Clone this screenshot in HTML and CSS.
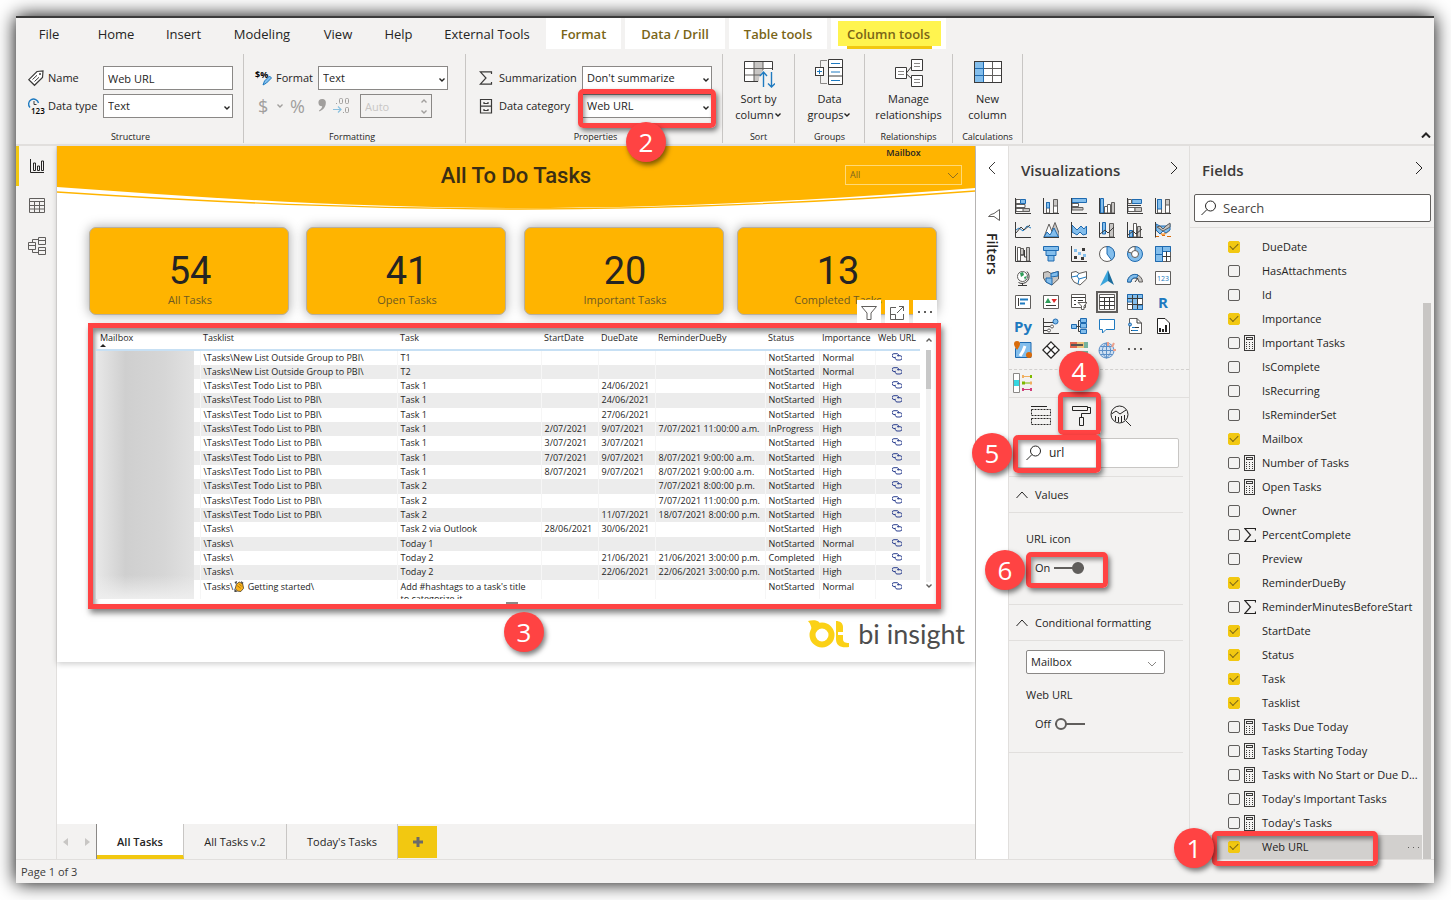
FILE: index.html
```html
<!DOCTYPE html>
<html lang="en">
<head>
  <meta charset="UTF-8">
  <meta name="viewport" content="width=device-width, initial-scale=1.0">
  <title>All To Do Tasks</title>
  <link rel="stylesheet" href="styles.css">
</head>
<body>
  <!-- Shared icons -->
  <svg class="sprite" aria-hidden="true">
    <symbol id="chev" viewBox="0 0 8 8"><path d="M1.5 2.5L4 5L6.500 2.500" fill="none" stroke="currentColor" stroke-width="1.400"/></symbol>
    <symbol id="chev-right" viewBox="0 0 8 14"><path d="M1 1L7 7L1 13" fill="none" stroke="currentColor"/></symbol>
    <symbol id="chev-up" viewBox="0 0 12 8"><path d="M.5 7L6 1L11.500 7" fill="none" stroke="currentColor"/></symbol>
    <symbol id="search" viewBox="0 0 16 16"><g fill="none" stroke="currentColor"><circle cx="9.500" cy="6" r="5"/><path d="M6 9.500L.5 15"/></g></symbol>
    <symbol id="sigma" viewBox="0 0 12 14"><path d="M11.500 2.500V.5H.8L6.500 7L.8 13.500H11.500V11.500" fill="none" stroke="currentColor" stroke-width="1.200"/></symbol>
    <symbol id="calc" viewBox="0 0 12 16"><rect x=".5" y=".5" width="10" height="15" fill="none" stroke="#3b3a39"/><rect x="2.500" y="2.500" width="6" height="2" fill="none" stroke="#3b3a39"/><path d="M2 7.500h8M2 9.500h8M2 11.500h8M2 13.500h8" stroke="#3b3a39" stroke-dasharray="1 2"/></symbol>
    <symbol id="link" viewBox="0 0 10 8"><path d="M3 4.500H2A1.800 1.800 0 0 1 2 .7H5A1.800 1.800 0 0 1 6.600 3.300M5 2.700H8A2 2 0 0 1 8 7H5A2 2 0 0 1 3.600 3.800" fill="none" stroke="#2b3f8f"/></symbol>
  </svg>

  <div class="app">
    <nav class="tabs">
      <button>File</button>
      <button>Home</button>
      <button>Insert</button>
      <button>Modeling</button>
      <button>View</button>
      <button>Help</button>
      <button>External Tools</button>
      <button class="context">Format</button>
      <button class="context">Data / Drill</button>
      <button class="context">Table tools</button>
      <button class="context active"><span>Column tools</span></button>
    </nav>

    <div class="ribbon">
      <section class="group structure">
        <div class="fields">
          <svg class="i16" viewBox="0 0 16 16"><path d="M9 1.500L15 1L14.500 7.500L6.500 15.300L.8 9.700Z" fill="#fff" stroke="#3b3a39" stroke-width="1.200"/><circle cx="12" cy="4" r="1" fill="#3b3a39"/><path d="M4.500 9.500L9 5.300M6.500 11.500L11 7.300" stroke="#3b3a39"/></svg>
          <label for="name">Name</label>
          <input id="name" type="text" value="Web URL">
          <svg class="i16" viewBox="0 0 16 16"><path d="M2 9.500A5 5 0 1 1 10.500 5" fill="none" stroke="#1e7ac0" stroke-width="1.400"/><path d="M6 3V6.500H8.500" fill="none" stroke="#3b3a39"/><text x="3" y="16" class="icon-123">123</text></svg>
          <label for="type">Data type</label>
          <span class="select"><select id="type"><option>Text</option></select><svg><use href="#chev"/></svg></span>
        </div>
        <h3>Structure</h3>
      </section>

      <section class="group formatting">
        <div class="fields">
          <svg class="i16" viewBox="0 0 16 16"><text x="-1" y="8" class="icon-fmt">$%</text><path d="M7 15L8.500 11L13.500 6L15.500 8L10.500 13Z" fill="#83beec" stroke="#1e7ac0"/></svg>
          <label for="format">Format</label>
          <span class="select"><select id="format"><option>Text</option></select><svg><use href="#chev"/></svg></span>
        </div>
        <div class="number-tools">
          <button class="dollar">$ <svg><use href="#chev"/></svg></button>
          <button class="percent">%</button>
          <button class="comma" aria-label="Thousands separator"><svg viewBox="0 0 8 14"><path d="M4 0A3.500 3.500 0 0 1 7.800 4C7.800 8 5 11 1.500 12.500L1 11.500C3 10.500 4 9 4.200 7.300A3.600 3.600 0 0 1 4 0Z" fill="#a19f9d"/></svg></button>
          <button class="decimals" aria-label="Decimal places"><svg viewBox="0 0 18 18"><g fill="none" stroke="#a19f9d"><rect x="6.500" y="1.500" width="3" height="5" rx="1"/><rect x="12.500" y="1.500" width="3" height="5" rx="1"/><rect x="12.500" y="10.500" width="3" height="5" rx="1"/></g><path d="M3 6.500H4M10 15.500H11" stroke="#a19f9d"/><path d="M0 12.500H8M5 9.500L8 12.500L5 15.500" fill="none" stroke="#8ac0de" stroke-width="1.200"/></svg></button>
          <span class="select spinner"><input type="text" value="Auto" aria-label="Decimal places" disabled><svg class="up"><use href="#chev"/></svg><svg class="down"><use href="#chev"/></svg></span>
        </div>
        <h3>Formatting</h3>
      </section>

      <section class="group properties">
        <div class="fields">
          <svg class="i14" viewBox="0 0 14 14"><path d="M12.500 3V.8H1.300L7 7L1.300 13.200H12.500V11" fill="none" stroke="#3b3a39" stroke-width="1.200"/></svg>
          <label for="sum">Summarization</label>
          <span class="select"><select id="sum"><option>Don't summarize</option></select><svg><use href="#chev"/></svg></span>
          <svg class="i14" viewBox="0 0 14 16"><path d="M1.500 1.500H12.500V15H1.500ZM1.500 8.200H12.500M5 4V5.500H9V4M5 11V12.500H9V11" fill="none" stroke="#3b3a39" stroke-width="1.200"/></svg>
          <label for="cat">Data category</label>
          <span class="select"><select id="cat"><option>Web URL</option></select><svg><use href="#chev"/></svg></span>
        </div>
        <h3>Properties</h3>
        <div class="mark mark-2"></div>
        <div class="step step-2">2</div>
      </section>

      <section class="group sort">
        <button class="big">
          <svg viewBox="0 0 32 30"><rect x="2" y="2.500" width="27" height="20" fill="#fff"/><rect x="11" y="2.500" width="9" height="20" fill="#c8c6c4"/><path d="M2 9.500H29M2 16H29M11 2.500V22.500M20 2.500V22.500" stroke="#605e5c"/><path d="M15 22.500H1.500V2.500H29.500V11" fill="none" stroke="#3b3a39"/><path d="M16 30V19L20 11H32V30Z" fill="#f3f2f1"/><path d="M20.500 28V13.500M17 17L20.500 13L24 17M28.500 13V27.500M25 24.500L28.500 28L32 24.500" fill="none" stroke="#1e7ac0" stroke-width="1.400"/></svg>
          Sort by<br>column<svg class="c"><use href="#chev"/></svg>
        </button>
        <h3>Sort</h3>
      </section>

      <section class="group groups">
        <button class="big">
          <svg viewBox="0 0 32 30"><path d="M14.500 .5H28.500V25.500H14.500Z" fill="#fff" stroke="#3b3a39"/><path d="M14.500 8.500H28.500M14.500 17H28.500" stroke="#3b3a39"/><path d="M17 4.500H26M17 13H26M17 21.500H26" stroke="#1e7ac0"/><path d="M13 1.500H6.500V8M6.500 17V24.500H13" fill="none" stroke="#8a8886"/><rect x="1.500" y="8.500" width="8" height="8" fill="#fff" stroke="#3b3a39"/><path d="M5.500 10.500V15M3 12.500H8" stroke="#1e7ac0"/></svg>
          Data<br>groups<svg class="c"><use href="#chev"/></svg>
        </button>
        <h3>Groups</h3>
      </section>

      <section class="group relations">
        <button class="big">
          <svg viewBox="0 0 32 30"><path d="M13 14.500L19 7M13 14.500L19 20" stroke="#3b3a39"/><path d="M2.500 8.500H13.500V19.500H2.500ZM18.500 .5H29.500V11.500H18.500ZM18.500 16.500H29.500V27.500H18.500Z" fill="#fff" stroke="#3b3a39"/><path d="M5 12.500H11M5 15.500H11M21 4.500H27M21 7.500H27M21 20.500H27M21 23.500H27" stroke="#8a8886"/></svg>
          Manage<br>relationships
        </button>
        <h3>Relationships</h3>
      </section>

      <section class="group calcs">
        <button class="big">
          <svg viewBox="0 0 32 30"><rect x="2.500" y="2.500" width="27" height="21" fill="#fff" stroke="#3b3a39"/><path d="M20.500 3V23M12 9.500H29M12 16.500H29" stroke="#605e5c"/><rect x="3" y="3" width="8.500" height="20" fill="#83beec"/><path d="M11.500 3V23M3 9.500H12M3 16.500H12" stroke="#1e6ab0"/></svg>
          New<br>column
        </button>
        <h3>Calculations</h3>
      </section>

      <button class="collapse" aria-label="Collapse ribbon"><svg viewBox="0 0 10 6"><path d="M1 5.500L5 1.500L9 5.500" fill="none" stroke="#252423" stroke-width="2"/></svg></button>
    </div>

    <div class="body">
      <nav class="side">
        <button class="on" aria-label="Report"><svg viewBox="0 0 18 18"><path d="M2.500 2V15.500H16M5.500 6V13.500H7.500V6ZM9.500 9V13.500H11.500V9ZM13.500 4V13.500H15.500V4Z" fill="none" stroke="#252423"/></svg></button>
        <button aria-label="Data"><svg viewBox="0 0 18 18"><path d="M1.500 1.500H16.500V15.500H1.500ZM1.500 4.500H16.500M1.500 8.500H16.500M1.500 12H16.500M6.500 4.500V15.500M11.500 4.500V15.500" fill="none" stroke="#605e5c"/></svg></button>
        <button aria-label="Model"><svg viewBox="0 0 18 18"><path d="M.5 5.500H7.500V12.500H.5ZM.5 8.500H7.500M10.500 .5H17.500V7.500H10.500ZM10.500 3.500H17.500M10.500 10.500H17.500V17.500H10.500ZM10.500 13.500H17.500M4.500 5.500V2.500H10.500M4.500 12.500V15.500H10.500" fill="none" stroke="#605e5c"/></svg></button>
      </nav>

      <main class="canvas">
        <div class="page">
          <header class="hero">
            <svg class="swoosh" viewBox="0 0 918 64" preserveAspectRatio="none"><path d="M0 0H918V42C740 56 600 62 463 62C300 62 150 52 0 41Z" fill="#ffb400"/><path d="M0 46C150 56 300 63 463 63C600 63 760 57 918 45" fill="none" stroke="#ffb400" stroke-width="1.300"/></svg>
            <h1>All To Do Tasks</h1>
            <div class="slicer">
              <label for="mailbox">Mailbox</label>
              <span class="select"><select id="mailbox"><option>All</option></select><svg viewBox="0 0 12 8"><path d="M1 1L6 6L11 1" fill="none" stroke="#8f7020"/></svg></span>
            </div>
          </header>

          <div class="cards">
            <div class="card"><b>54</b><span>All Tasks</span></div>
            <div class="card"><b>41</b><span>Open Tasks</span></div>
            <div class="card"><b>20</b><span>Important Tasks</span></div>
            <div class="card"><b>13</b><span>Completed Tasks</span></div>
          </div>

          <div class="visual">
            <div class="visual-tools">
              <button aria-label="Filters"><svg viewBox="0 0 18 18"><path d="M1.500 2.500H16.500L11 9V15.500H7V9Z" fill="none" stroke="#605e5c"/></svg></button>
              <button aria-label="Focus mode"><svg viewBox="0 0 18 18"><path d="M8 3.500H2.500V15.500H15.500V10M2.500 10.500H7.500V15.500M9 9L15.500 2.500M11 2.500H15.500V7" fill="none" stroke="#605e5c"/></svg></button>
              <button aria-label="More options"><svg viewBox="0 0 18 18"><path d="M2 8H4M8 8H10M14 8H16" stroke="#605e5c" stroke-width="2"/></svg></button>
            </div>
            <div class="scroll">
              <table>
                <colgroup><col class="w-mail"><col class="w-list"><col class="w-task"><col class="w-date"><col class="w-date"><col class="w-rem"><col class="w-stat"><col class="w-imp"><col class="w-url"></colgroup>
                <thead>
                  <tr><th class="sorted">Mailbox</th><th>Tasklist</th><th>Task</th><th>StartDate</th><th>DueDate</th><th>ReminderDueBy</th><th>Status</th><th>Importance</th><th>Web URL</th></tr>
                </thead>
                <tbody>
                  <tr><td></td><td>\Tasks\New List Outside Group to PBI\</td><td>T1</td><td></td><td></td><td></td><td>NotStarted</td><td>Normal</td><td><a href="#" aria-label="Open"><svg><use href="#link"/></svg></a></td></tr>
                  <tr><td></td><td>\Tasks\New List Outside Group to PBI\</td><td>T2</td><td></td><td></td><td></td><td>NotStarted</td><td>Normal</td><td><a href="#" aria-label="Open"><svg><use href="#link"/></svg></a></td></tr>
                  <tr><td></td><td>\Tasks\Test Todo List to PBI\</td><td>Task 1</td><td></td><td>24/06/2021</td><td></td><td>NotStarted</td><td>High</td><td><a href="#" aria-label="Open"><svg><use href="#link"/></svg></a></td></tr>
                  <tr><td></td><td>\Tasks\Test Todo List to PBI\</td><td>Task 1</td><td></td><td>24/06/2021</td><td></td><td>NotStarted</td><td>High</td><td><a href="#" aria-label="Open"><svg><use href="#link"/></svg></a></td></tr>
                  <tr><td></td><td>\Tasks\Test Todo List to PBI\</td><td>Task 1</td><td></td><td>27/06/2021</td><td></td><td>NotStarted</td><td>High</td><td><a href="#" aria-label="Open"><svg><use href="#link"/></svg></a></td></tr>
                  <tr><td></td><td>\Tasks\Test Todo List to PBI\</td><td>Task 1</td><td>2/07/2021</td><td>9/07/2021</td><td>7/07/2021 11:00:00 a.m.</td><td>InProgress</td><td>High</td><td><a href="#" aria-label="Open"><svg><use href="#link"/></svg></a></td></tr>
                  <tr><td></td><td>\Tasks\Test Todo List to PBI\</td><td>Task 1</td><td>3/07/2021</td><td>3/07/2021</td><td></td><td>NotStarted</td><td>High</td><td><a href="#" aria-label="Open"><svg><use href="#link"/></svg></a></td></tr>
                  <tr><td></td><td>\Tasks\Test Todo List to PBI\</td><td>Task 1</td><td>7/07/2021</td><td>9/07/2021</td><td>8/07/2021 9:00:00 a.m.</td><td>NotStarted</td><td>High</td><td><a href="#" aria-label="Open"><svg><use href="#link"/></svg></a></td></tr>
                  <tr><td></td><td>\Tasks\Test Todo List to PBI\</td><td>Task 1</td><td>8/07/2021</td><td>9/07/2021</td><td>8/07/2021 9:00:00 a.m.</td><td>NotStarted</td><td>High</td><td><a href="#" aria-label="Open"><svg><use href="#link"/></svg></a></td></tr>
                  <tr><td></td><td>\Tasks\Test Todo List to PBI\</td><td>Task 2</td><td></td><td></td><td>7/07/2021 8:00:00 p.m.</td><td>NotStarted</td><td>High</td><td><a href="#" aria-label="Open"><svg><use href="#link"/></svg></a></td></tr>
                  <tr><td></td><td>\Tasks\Test Todo List to PBI\</td><td>Task 2</td><td></td><td></td><td>7/07/2021 11:00:00 p.m.</td><td>NotStarted</td><td>High</td><td><a href="#" aria-label="Open"><svg><use href="#link"/></svg></a></td></tr>
                  <tr><td></td><td>\Tasks\Test Todo List to PBI\</td><td>Task 2</td><td></td><td>11/07/2021</td><td>18/07/2021 8:00:00 p.m.</td><td>NotStarted</td><td>High</td><td><a href="#" aria-label="Open"><svg><use href="#link"/></svg></a></td></tr>
                  <tr><td></td><td>\Tasks\</td><td>Task 2 via Outlook</td><td>28/06/2021</td><td>30/06/2021</td><td></td><td>NotStarted</td><td>High</td><td><a href="#" aria-label="Open"><svg><use href="#link"/></svg></a></td></tr>
                  <tr><td></td><td>\Tasks\</td><td>Today 1</td><td></td><td></td><td></td><td>NotStarted</td><td>Normal</td><td><a href="#" aria-label="Open"><svg><use href="#link"/></svg></a></td></tr>
                  <tr><td></td><td>\Tasks\</td><td>Today 2</td><td></td><td>21/06/2021</td><td>21/06/2021 3:00:00 p.m.</td><td>Completed</td><td>High</td><td><a href="#" aria-label="Open"><svg><use href="#link"/></svg></a></td></tr>
                  <tr><td></td><td>\Tasks\</td><td>Today 2</td><td></td><td>22/06/2021</td><td>22/06/2021 3:00:00 p.m.</td><td>NotStarted</td><td>High</td><td><a href="#" aria-label="Open"><svg><use href="#link"/></svg></a></td></tr>
                  <tr><td></td><td>\Tasks\<svg class="clap" viewBox="0 0 12 12"><path d="M1 1L4 0L3 4ZM8 0L11 2L9 4ZM1 8L4 12H1Z" fill="#4a4a4a"/><path d="M3 4L6 1L10 3L11 8L8 11.500L4 11L2 8Z" fill="#f9b21d" stroke="#3b3020" stroke-width=".8"/><path d="M4 5L8 8M6 3L9 6" stroke="#8a5a00" stroke-width=".7"/></svg> Getting started\</td><td>Add #hashtags to a task's title<br>to categorize it</td><td></td><td></td><td></td><td>NotStarted</td><td>Normal</td><td><a href="#" aria-label="Open"><svg><use href="#link"/></svg></a></td></tr>
                </tbody>
              </table>
              <div class="redacted"></div>
            </div>
            <div class="vbar"><svg class="up"><use href="#chev"/></svg><i></i><svg><use href="#chev"/></svg></div>
            <div class="handle"></div>
            <div class="step step-3">3</div>
          </div>

          <footer class="brand">
            <svg viewBox="0 0 42 28"><path d="M0 1C4 0 9 0 11 2L13 6L4 14C4 9 3 4 0 1Z" fill="#fbd116"/><circle cx="14" cy="15" r="9.500" fill="none" stroke="#fbd116" stroke-width="6"/><path d="M28 1C32 1 35 3 35 7V12H30V15H35V19C35 22 37 23 41 23V27C33 28 28 26 28 19Z" fill="#fbd116"/></svg>
            <span>bi insight</span>
          </footer>
        </div>

        <div class="pages">
          <span class="arrows"><svg viewBox="0 0 40 10"><path d="M11 1V9L6 5ZM28 1V9L33 5Z" fill="#c8c6c4"/></svg></span>
          <button class="on">All Tasks</button>
          <button>All Tasks v.2</button>
          <button class="third">Today's Tasks</button>
          <button class="add" aria-label="New page"><svg viewBox="0 0 12 12"><path d="M6 1V11M1 6H11" stroke="#6b6a68" stroke-width="3"/></svg></button>
        </div>
      </main>

      <aside class="filters">
        <svg class="back" viewBox="0 0 8 14"><path d="M7 1L1 7L7 13" fill="none" stroke="#3b3a39"/></svg>
        <svg class="funnel" viewBox="0 0 12 12"><path d="M11.500 .5V11.500L6 7.500H.5L3 5.500L6 4.500Z" fill="none" stroke="#605e5c"/></svg>
        <h2>Filters</h2>
      </aside>

      <aside class="viz">
        <div class="head"><h2>Visualizations</h2><svg><use href="#chev-right"/></svg></div>
        <div class="gallery">
          <button><svg viewBox="0 0 16 16"><path class="g" d="M1 10.500H14.500V13.500H1Z"/><path class="w" d="M1 1.500H5.500V5.500H1ZM1 6.500H10V9.500H1ZM1 10.500H8V13.500H1Z"/><path class="b" d="M5.500 1.500H10.500V5.500H5.500Z"/><path class="k" d="M.5 0V15.500H16"/></svg></button>
          <button><svg viewBox="0 0 16 16"><path class="w" d="M3.500 4.500H6.500V15H3.500ZM10.500 2.500H14.500V15H10.500Z"/><path class="b" d="M3.500 4.500H6.500V10H3.500Z"/><path class="g" d="M10.500 1.500H14.500V8H10.500Z"/><path class="k" d="M.5 0V15.500H16"/></svg></button>
          <button><svg viewBox="0 0 16 16"><path class="b" d="M1 .5H15.500V4.500H1Z"/><path class="w" d="M1 5.500H7.500V8.500H1Z"/><path class="g" d="M1 9.500H12V12H1Z"/><path class="k" d="M.5 0V15.500H16"/></svg></button>
          <button><svg viewBox="0 0 16 16"><path class="b" d="M1.500 .5H4.500V15H1.500Z"/><path class="w" d="M5.500 8.500H8.500V15H5.500ZM8.500 6.500H11.500V15H8.500Z"/><path class="g" d="M12.500 4.500H15.500V15H12.500Z"/><path class="k" d="M.5 0V15.500H16"/></svg></button>
          <button><svg viewBox="0 0 16 16"><path class="b" d="M5 1.500H14.500V5.500H5Z"/><path class="w" d="M1 1.500H4.500V5.500H1ZM1 9.500H8V13.500H1Z"/><path class="g" d="M8 9.500H14.500V13.500H8Z"/><path class="k" d="M.5 0V15.500H16M1 7.500H14"/></svg></button>
          <button><svg viewBox="0 0 16 16"><path class="w" d="M2.500 1.500H6.500V15H2.500ZM10.500 1.500H14.500V15H10.500Z"/><path class="b" d="M2.500 1.500H6.500V11H2.500Z"/><path class="g" d="M10.500 1.500H14.500V7H10.500Z"/><path class="k" d="M.5 0V15.500H16"/></svg></button>

          <button><svg viewBox="0 0 16 16"><path class="bl" d="M1 8L4 6L8 9L12 4L16 6"/><path class="k" d="M.5 0V15.500H16M1 11L6 5L9 8L15 3"/></svg></button>
          <button><svg viewBox="0 0 16 16"><path class="g" d="M6 15L12 .5L16 11V15Z"/><path class="w" d="M1 15L6 2L11 15Z"/><path class="b" d="M1 15L4 10L7 13L11 6L15.500 15Z"/><path class="k" d="M.5 15.500H16"/></svg></button>
          <button><svg viewBox="0 0 16 16"><path class="b" d="M1 3L6 8L10 4L13 7L15.500 4V12L12 13L9 10L6 13L1 10Z"/><path class="k" d="M.5 0V15.500H16"/></svg></button>
          <button><svg viewBox="0 0 16 16"><path class="b" d="M3.500 .5H6.500V12H3.500Z"/><path class="g" d="M10.500 1.500H14.500V15H10.500Z"/><path class="k" d="M.5 0V15.500H16M1 12L6 8L9 11L15 5"/></svg></button>
          <button><svg viewBox="0 0 16 16"><path class="b" d="M2.500 8.500H5.500V15H2.500Z"/><path class="w" d="M6.500 1.500H9.500V15H6.500Z"/><path class="g" d="M10.500 4.500H13.500V15H10.500Z"/><path class="k" d="M.5 0V15.500H16M1 13L6 9L9 12L15 7"/></svg></button>
          <button><svg viewBox="0 0 16 16"><path d="M1 5L8 12L15 4V9L8 14L1 9Z" fill="#f5a04c"/><path class="b" d="M1 2L5 4H11L15 2V8L11 11L8 9L5 12L1 8Z"/><path class="g" d="M5 4L8 7L11 4L15 1V5L8 9L2 5Z"/><path d="M1 14.500H4M7 13.500H10M12 14.500H16" stroke="#d96b0a"/><path class="k" d="M.5 0V15.500"/></svg></button>

          <button><svg viewBox="0 0 16 16"><path class="w" d="M2.500 1.500H5.500V15H2.500Z"/><path class="g" d="M5.500 2.500H8.500V9H5.500ZM11.500 1.500H14.500V15H11.500Z"/><path class="k" d="M.5 0V15.500H16M9.500 4V11H12M6 9H10"/></svg></button>
          <button><svg viewBox="0 0 16 16"><path class="b" d="M.5 .5H15.500V4.500H.5ZM3 4.500H13V9.500H3ZM5 9.500H11V15H5Z"/></svg></button>
          <button><svg viewBox="0 0 16 16"><path class="k" d="M.5 0V15.500H16"/><g fill="#83beec"><rect x="3" y="3" width="3" height="3"/><rect x="7" y="6" width="3" height="3"/><rect x="12" y="8" width="3" height="3"/></g><g fill="#3b3a39"><rect x="11" y="2" width="3" height="3"/><rect x="3" y="10" width="3" height="3"/><rect x="10" y="11" width="3" height="3"/></g></svg></button>
          <button><svg viewBox="0 0 16 16"><circle class="w" cx="8" cy="8" r="7.500"/><path class="b" d="M8 8V.5A7.500 7.500 0 0 1 12.500 14Z"/></svg></button>
          <button><svg viewBox="0 0 16 16"><circle class="b" cx="8" cy="8" r="7.500"/><path class="w" d="M8 8V.5A7.500 7.500 0 0 0 1 6Z"/><circle class="w" cx="8" cy="8" r="3.500"/></svg></button>
          <button><svg viewBox="0 0 16 16"><path class="w" d="M.5 .5H15.500V15.500H.5Z"/><path class="b" d="M.5 .5H7.500V8.500H.5ZM7.500 .5H15.500V5.500H7.500ZM.5 8.500H7.500V15.500H.5Z"/><path class="k" d="M7.500 10.500H15.500M11.500 5.500V15.500"/></svg></button>

          <button><svg viewBox="0 0 16 16"><circle class="w" cx="7.500" cy="6.500" r="5"/><path d="M5 3L8 2L9 5L6 7ZM9 7L12 6L10 10Z" fill="#2f9e5a"/><path class="k" d="M12 1.500A7 7 0 0 1 3.500 12.500M7.500 13V15.500M3 15.500H12"/></svg></button>
          <button><svg viewBox="0 0 16 16"><path class="g" d="M.5 2.500L5 1.500L8 3.500L15.500 1.500V9L9 15L3 12L.5 8Z"/><path class="b" d="M8 3.500L15 1.500V6L8 7ZM3 8H9V15L3 12Z"/></svg></button>
          <button><svg viewBox="0 0 16 16"><path class="w" d="M.5 2.500L5 1.500L8 3.500L15.500 1.500V9L9 15L3 12L.5 8Z"/><path class="bl" d="M.5 7L6 6L8 3.500M6 6L8 9L15 7M8 9L7 14"/></svg></button>
          <button><svg viewBox="0 0 16 16"><path d="M9 0L1 16L9 11Z" fill="#3ba5dc"/><path d="M9 0L15 15L9 11Z" fill="#1b6c9c"/></svg></button>
          <button><svg viewBox="0 0 16 16"><path class="g" d="M.5 12A7.500 7.500 0 0 1 15.500 12H12A4 4 0 0 0 4 12Z"/><path class="b" d="M.5 12A7.500 7.500 0 0 1 11 5L9.500 8A4 4 0 0 0 4 12Z"/><path class="k" d="M8 12L11 8"/></svg></button>
          <button><svg viewBox="0 0 16 16"><path class="w" d="M.5 1.500H15.500V14.500H.5Z"/><text x="2" y="11" class="t123">123</text></svg></button>

          <button><svg viewBox="0 0 16 16"><path class="w" d="M.5 1.500H15.500V14.500H.5Z"/><path class="k" d="M3.500 4V12"/><path class="bl" d="M5 5.500H13M5 9.500H10" stroke-width="2"/></svg></button>
          <button><svg viewBox="0 0 16 16"><path class="w" d="M.5 1.500H15.500V14.500H.5Z"/><path d="M2 9L5 4L8 9Z" fill="#2f9e5a"/><path d="M8.500 5H14L11 9Z" fill="#e02b2b"/><path class="k" d="M3 11.500H13"/></svg></button>
          <button><svg viewBox="0 0 16 16"><path class="w" d="M.5 .5H14.500V13.500H.5Z"/><path class="k" d="M3 6.500H5M3 10.500H5M.5 3.500H14M7 6.500H12"/><path class="w" d="M7 8.500H16L13 12V15.500H10.500V12Z"/></svg></button>
          <button class="picked"><svg viewBox="0 0 16 16"><path class="w" d="M.5 .5H15.500V15.500H.5Z"/><path class="k" d="M.5 3.500H15.500M.5 7.500H15.500M.5 11.500H15.500M5.500 4V15M10.500 4V15"/></svg></button>
          <button><svg viewBox="0 0 16 16"><path class="w" d="M.5 .5H15.500V15.500H.5Z"/><path class="b" d="M.5 .5H15.500V4.500H10.500V11H15.500V15.500H5.500V8H.5Z"/><path class="k" d="M.5 4.500H15.500M.5 10.500H15.500M5.500 1V15M10.500 1V15"/></svg></button>
          <button class="word">R</button>

          <button class="word">Py</button>
          <button><svg viewBox="0 0 16 16"><path class="k" d="M.5 0V15.500H16M1 4.500H10M1 8.500H7M1 12.500H4"/><circle class="b" cx="12.500" cy="3.500" r="2.500"/><circle class="w" cx="9" cy="8.500" r="1.500"/><circle class="w" cx="6" cy="12.500" r="1.500"/></svg></button>
          <button><svg viewBox="0 0 16 16"><path class="b" d="M.5 6.500H5.500V10.500H.5ZM9.500 .5H15.500V4.500H9.500ZM9.500 5.500H15.500V10H9.500ZM9.500 11.500H15.500V15.500H9.500Z"/><path class="k" d="M5.500 8.500H9M7.500 2.500V13.500H9M7.500 2.500H9"/></svg></button>
          <button><svg viewBox="0 0 16 16"><path d="M.5 1.500H15.500V11.500H7L3.500 15V11.500H.5Z" fill="#fff" stroke="#1e7ac0"/></svg></button>
          <button><svg viewBox="0 0 16 16"><path class="w" d="M2.500 .5H10L14.500 5V15.500H2.500Z"/><path class="k" d="M10 .5V5H14.500M8 9.500H12M4 12.500H10"/><circle class="b" cx="3" cy="6.500" r="1.500"/><path class="bl" d="M5 9.500H8M5 12.500H11"/></svg></button>
          <button><svg viewBox="0 0 16 16"><path d="M2.500 .5H10L14.500 5V15.500H2.500Z" fill="#fff" stroke="#252423"/><path d="M5 10V14M8 11V14M11 7V14" stroke="#252423" stroke-width="2"/></svg></button>

          <button class="large"><svg viewBox="0 0 18 18"><path class="b" d="M1.500 7.500L6 1.500H17V16.500H1.500Z"/><path d="M6 15L9 10L11 5" stroke="#fff" stroke-width="3" fill="none"/><path d="M3 0A3 3 0 0 1 6 3C6 5 3 9 3 9S0 5 0 3A3 3 0 0 1 3 0Z" fill="#d96b0a"/><circle cx="15" cy="14" r="3" fill="#d96b0a"/></svg></button>
          <button class="large"><svg viewBox="0 0 18 18"><path d="M9 .8L17.200 9L9 17.200L.8 9ZM5 5L13 13M13 5L5 13" fill="#fff" stroke="#252423" stroke-width="1.200"/></svg></button>
          <button class="large"><svg viewBox="0 0 18 16"><path d="M0 0H10V6H0Z" fill="#e0674f"/><path d="M7 0H14V6H7Z" fill="#f0c27a"/><path d="M14 0H18V6H14ZM6 9H18V12H6Z" fill="#76b39d"/><path d="M1 3H13" stroke="#555" stroke-width="2"/></svg></button>
          <button class="large"><svg viewBox="0 0 18 18"><circle cx="8.500" cy="9.500" r="7.500" fill="#cfe0f2" stroke="#5b8fc7"/><path d="M8.500 2V17M1 9.500H16M2.500 5.500H14.500M2.500 13.500H14.500M8.500 2C3 6 3 13 8.500 17C14 13 14 6 8.500 2" fill="none" stroke="#5b8fc7"/><path d="M10 5V1M14 6L16 2M15 9H18" stroke="#eda08a" stroke-width="2"/></svg></button>
          <button><svg viewBox="0 0 16 16"><path d="M1 7H3M7 7H9M13 7H15" stroke="#605e5c" stroke-width="2"/></svg></button>
        </div>
        <div class="custom">
          <svg viewBox="0 0 20 20"><path d="M.5 .5H6.500V19.500H.5Z" fill="#fff" stroke="#8a8886"/><path d="M1 7H6V13H1Z" fill="#34d6e0"/><path d="M9 3.500H19" stroke="#f0b060"/><path d="M9 10H19" stroke="#7fba00"/><path d="M9 16.500H19" stroke="#d0407a"/><path d="M9 3.500H11M17 10H19" stroke="#f0b060" stroke-width="3"/><path d="M17 3.500H19M9 10H12" stroke="#7fba00" stroke-width="3"/><path d="M9 16.500H11M17 16.500H19" stroke="#d0407a" stroke-width="3"/></svg>
        </div>
        <div class="modes">
          <button aria-label="Fields"><svg viewBox="0 0 22 22"><path d="M1 1.500H17" stroke="#252423"/><path d="M1.500 4.500H20.500V10.500H1.500ZM1.500 13.500H20.500V19.500H1.500Z" fill="none" stroke="#252423" stroke-dasharray="2 1"/></svg></button>
          <button class="on" aria-label="Format"><svg viewBox="0 0 22 22"><path d="M2.500 1.500H17.500V5.500H2.500ZM17.500 2.500H20.500V8.500H11.500V12M9.500 12.500H13.500V20.500H9.500Z" fill="none" stroke="#252423"/></svg></button>
          <button aria-label="Analytics"><svg viewBox="0 0 22 22"><circle cx="9.500" cy="9.500" r="8.500" fill="none" stroke="#252423"/><path d="M16 16L21 21M1.500 9L6 6L10 9L16 5" fill="none" stroke="#252423"/><path d="M5.500 11V16M8.500 12V17M11.500 11V17M14.500 10V15" stroke="#252423"/></svg></button>
        </div>
        <label class="find"><svg><use href="#search"/></svg><input type="text" value="url" aria-label="Search"></label>
        <h4><svg><use href="#chev-up"/></svg>Values</h4>
        <div class="option first">
          <label for="url-icon">URL icon</label>
          <div class="switch"><span>On</span><input id="url-icon" type="checkbox" checked></div>
        </div>
        <h4><svg><use href="#chev-up"/></svg>Conditional formatting</h4>
        <div class="option second">
          <span class="select"><select aria-label="Column"><option>Mailbox</option></select><svg viewBox="0 0 10 8"><path d="M1 2L5 6L9 2" fill="none" stroke="#8a8886"/></svg></span>
          <label for="cond-url">Web URL</label>
          <div class="switch"><span>Off</span><input id="cond-url" type="checkbox"></div>
        </div>
        <div class="mark mark-4"></div>
        <div class="mark mark-5"></div>
        <div class="mark mark-6"></div>
        <div class="step step-4">4</div>
        <div class="step step-5">5</div>
        <div class="step step-6">6</div>
      </aside>

      <aside class="data">
        <div class="head"><h2>Fields</h2><svg><use href="#chev-right"/></svg></div>
        <label class="find"><svg><use href="#search"/></svg><input type="text" placeholder="Search" aria-label="Search fields"></label>
        <div class="list">
          <ul>
            <li><label><input type="checkbox" checked><i></i>DueDate</label></li>
            <li><label><input type="checkbox"><i></i>HasAttachments</label></li>
            <li><label><input type="checkbox"><i></i>Id</label></li>
            <li><label><input type="checkbox" checked><i></i>Importance</label></li>
            <li><label><input type="checkbox"><svg><use href="#calc"/></svg>Important Tasks</label></li>
            <li><label><input type="checkbox"><i></i>IsComplete</label></li>
            <li><label><input type="checkbox"><i></i>IsRecurring</label></li>
            <li><label><input type="checkbox"><i></i>IsReminderSet</label></li>
            <li><label><input type="checkbox" checked><i></i>Mailbox</label></li>
            <li><label><input type="checkbox"><svg><use href="#calc"/></svg>Number of Tasks</label></li>
            <li><label><input type="checkbox"><svg><use href="#calc"/></svg>Open Tasks</label></li>
            <li><label><input type="checkbox"><i></i>Owner</label></li>
            <li><label><input type="checkbox"><svg><use href="#sigma"/></svg>PercentComplete</label></li>
            <li><label><input type="checkbox"><i></i>Preview</label></li>
            <li><label><input type="checkbox" checked><i></i>ReminderDueBy</label></li>
            <li><label><input type="checkbox"><svg><use href="#sigma"/></svg>ReminderMinutesBeforeStart</label></li>
            <li><label><input type="checkbox" checked><i></i>StartDate</label></li>
            <li><label><input type="checkbox" checked><i></i>Status</label></li>
            <li><label><input type="checkbox" checked><i></i>Task</label></li>
            <li><label><input type="checkbox" checked><i></i>Tasklist</label></li>
            <li><label><input type="checkbox"><svg><use href="#calc"/></svg>Tasks Due Today</label></li>
            <li><label><input type="checkbox"><svg><use href="#calc"/></svg>Tasks Starting Today</label></li>
            <li><label><input type="checkbox"><svg><use href="#calc"/></svg>Tasks with No Start or Due D...</label></li>
            <li><label><input type="checkbox"><svg><use href="#calc"/></svg>Today's Important Tasks</label></li>
            <li><label><input type="checkbox"><svg><use href="#calc"/></svg>Today's Tasks</label></li>
            <li class="selected"><label><input type="checkbox" checked><i></i>Web URL</label><button aria-label="More options"><svg viewBox="0 0 12 16"><path d="M0 8.500H1M5 8.500H6M10 8.500H11" stroke="#605e5c"/></svg></button></li>
          </ul>
          <div class="bar"></div>
        </div>
        <div class="mark mark-1"></div>
        <div class="step step-1">1</div>
      </aside>
    </div>

    <footer class="status">Page 1 of 3</footer>
  </div>
</body>
</html>
```
FILE: styles.css
```css
*, *::before, *::after {
  box-sizing: border-box;
}
body {
  margin: 0;
  padding: 16px 17px 17px 16px;
  background: #fff;
  color: #252423;
  font: 11px/16px "Open Sans", "Noto Sans", sans-serif;
}
h1, h2, h3, h4, ul {
  margin: 0;
  padding: 0;
  font-weight: 400;
}
button, input, select {
  margin: 0;
  padding: 0;
  border: 0;
  border-radius: 0;
  background: none;
  color: inherit;
  font: inherit;
}
svg {
  display: block;
}
.sprite {
  position: absolute;
  width: 0;
  height: 0;
}
.app {
  display: flex;
  flex-direction: column;
  min-height: calc(100vh - 33px);
  border-top: 2px solid #3b3b3b;
  background: #f3f2f1;
  box-shadow: 0 0 18px #000;
}

/* Tabs */
.tabs {
  display: grid;
  grid-template-columns: 66px 68px 67px 90px 62px 59px 118px 79px 104px 102px 115px;
  height: 31px;
  font-size: 13px;
}
.tabs .context {
  margin-right: 4px;
  background: #fff;
  color: #7a6517;
  font-weight: 600;
}
.tabs .active {
  margin-right: 0;
  padding: 3px 5px 0 7px;
}
.active span {
  display: block;
  height: 28px;
  padding-right: 2px;
  line-height: 27px;
  background: linear-gradient(#f2c811, #f2c811) 50% 100% / 85px 3px no-repeat,
    linear-gradient(#fff44f, #fff44f) 0 0 / 100% 25px no-repeat;
}

/* Ribbon */
.ribbon {
  position: relative;
  display: flex;
  height: 97px;
  padding-top: 5px;
  border-bottom: 2px solid #e1dfdd;
}
.group {
  position: relative;
  display: flex;
  flex-direction: column;
  height: 89px;
  border-right: 1px solid #c8c6c4;
}
.group h3 {
  margin-top: auto;
  font-size: 9px;
  line-height: 12px;
  text-align: center;
}
.structure { width: 228px; padding: 12px 10px 0 12px; }
.formatting { width: 222px; padding: 12px 17px 0 12px; }
.properties { width: 257px; padding: 12px 10px 0 13px; }
.sort { width: 72px; }
.groups { width: 70px; }
.relations { width: 88px; }
.calcs { width: 70px; }
.fields {
  display: grid;
  grid-template-columns: 20px 1fr 130px;
  row-gap: 4px;
  align-items: center;
  white-space: nowrap;
}
.i16 { width: 16px; height: 16px; overflow: visible; }
.i14 { width: 14px; height: 16px; }
.icon-123 { font-size: 8px; font-weight: 600; }
.icon-fmt { font-size: 9px; font-weight: 700; }
.fields input, .select {
  width: 130px;
  height: 24px;
  border: 1px solid #8a8886;
  background: #fff;
}
.fields input {
  padding: 0 4px;
}
.select {
  position: relative;
  display: block;
}
.select select {
  width: 100%;
  height: 100%;
  padding: 0 4px;
  appearance: none;
}
.select svg {
  position: absolute;
  right: 1px;
  top: 9px;
  width: 8px;
  height: 8px;
}
.number-tools {
  display: flex;
  align-items: center;
  height: 24px;
  margin-top: 4px;
  color: #a19f9d;
  font-size: 18px;
}
.number-tools button {
  display: flex;
  align-items: center;
}
.dollar { width: 34px; gap: 8px; }
.number-tools .dollar { padding-left: 2px; }
.dollar svg { width: 8px; height: 8px; }
.percent { width: 28px; }
.comma svg { width: 8px; height: 14px; }
.decimals { margin-left: 7px; }
.decimals svg { width: 18px; height: 18px; }
.number-tools .spinner {
  width: 72px;
  margin-left: auto;
  margin-right: 16px;
  background: #f3f2f1;
  font-size: 11px;
}
.spinner input {
  display: block;
  width: 60px;
  height: 22px;
  padding-left: 4px;
  color: #c8c6c4;
}
.select.spinner svg { right: 3px; }
.select.spinner .up { top: 2px; transform: rotate(180deg); }
.select.spinner .down { top: 13px; }
.big {
  padding-top: 5px;
  text-align: center;
}
.big svg {
  width: 32px;
  height: 30px;
  margin: 0 auto 2px;
}
.big .c {
  display: inline-block;
  width: 8px;
  height: 8px;
  margin: 0;
}
.collapse {
  margin: auto 3px 6px auto;
}
.collapse svg { width: 10px; height: 6px; }

/* Body */
.body {
  display: flex;
  flex: 1;
}
.side {
  display: flex;
  flex-direction: column;
  width: 41px;
  border-right: 1px solid #e1dfdd;
}
.side button {
  height: 40px;
  padding-left: 12px;
}
.side .on {
  padding-left: 9px;
  border-left: 3px solid #f2c811;
}
.side svg { width: 18px; height: 18px; }
.canvas {
  display: flex;
  flex: 1;
  flex-direction: column;
  min-width: 0;
  border-right: 1px solid #c8c6c4;
  background: #fff;
}
.page {
  flex: none;
  height: 516px;
  background: #fff;
  box-shadow: 0 2px 6px rgba(0, 0, 0, .2);
}
.hero {
  position: relative;
  display: grid;
  grid-template-columns: 1fr auto 1fr;
  height: 64px;
}
.swoosh {
  position: absolute;
  inset: 0;
  width: 100%;
  height: 100%;
}
.hero h1 {
  position: relative;
  grid-column: 2;
  font: 500 22px/60px Roboto, sans-serif;
  color: #3a2e14;
}
.slicer {
  position: relative;
  width: 117px;
  margin-right: 13px;
  justify-self: end;
  text-align: center;
  font-size: 9px;
}
.slicer label {
  display: block;
  height: 19px;
  line-height: 14px;
  font-weight: 600;
}
.slicer .select {
  width: 117px;
  height: 20px;
  border-color: #ffd977;
  background: none;
  color: #7d6420;
}
.slicer .select svg { right: 2px; top: 6px; width: 12px; }
.cards {
  display: grid;
  grid-template-columns: 217fr 218fr 213fr 200fr;
  margin: 17px 38px 0 32px;
}
.card {
  display: flex;
  flex-direction: column;
  width: 200px;
  height: 88px;
  padding: 22px 0 0 2px;
  border: 1px solid #b8b0a0;
  border-radius: 7px;
  background: #ffb400;
  box-shadow: 0 0 12px rgba(0, 0, 0, .35);
  text-align: center;
}
.card b {
  font: 400 38px/42px Roboto, sans-serif;
}
.card span {
  color: #6e5a22;
}
.visual {
  position: relative;
  display: flex;
  height: 286px;
  margin: 8px 34px 0 31px;
  padding-left: 3px;
  border: 5px solid #ff4343;
  background: #fff;
  box-shadow: 2px 4px 6px rgba(0, 0, 0, .5), inset 2px 4px 5px rgba(0, 0, 0, .45);
}
.visual-tools {
  position: absolute;
  top: -28px;
  right: -1px;
  display: flex;
  gap: 4px;
}
.visual-tools button {
  width: 24px;
  height: 23px;
  padding: 4px 3px;
  background: #fff;
}
.visual-tools svg { width: 18px; height: 18px; }
.scroll {
  position: relative;
  flex: 1;
  height: 271px;
  overflow: hidden;
}
table {
  width: 100%;
  border-collapse: collapse;
  table-layout: fixed;
  font-size: 9px;
  line-height: 12px;
  white-space: nowrap;
}
.w-mail { width: 104px; }
.w-task { width: 144px; }
.w-date { width: 57px; }
.w-rem { width: 110px; }
.w-stat { width: 54px; }
.w-imp { width: 56px; }
.w-url { width: 45px; }
th, td {
  padding: 0 0 0 4px;
  font-weight: 400;
  text-align: left;
  vertical-align: top;
}
th {
  height: 22px;
  padding: 4px 0 0 3px;
  border-bottom: 2px solid #c7e0f4;
}
.sorted { padding-left: 4px; }
.sorted::after {
  content: "";
  display: block;
  width: 0;
  border: 3px solid transparent;
  border-top: 0;
  border-bottom-color: #252423;
}
tbody tr { height: 14px; }
tbody tr:nth-child(3n+1) { height: 15px; }
tbody tr:nth-child(even) { background: #ececec; }
td { padding: 1px 0 0 3px; }
td + td { border-left: 1px solid #f6f6f6; }
td:last-child { padding: 2px 0 0 16px; }
td svg { width: 10px; height: 8px; }
td .clap {
  display: inline-block;
  width: 12px;
  height: 11px;
  vertical-align: -2px;
}
.redacted {
  position: absolute;
  left: 0;
  top: 23px;
  bottom: 0;
  width: 98px;
  background: linear-gradient(90deg, #e8e8e8, #cfcfcf 30%, #d6d6d6 70%, #e2e2e2);
}
.redacted::after {
  content: "";
  position: absolute;
  inset: auto 0 0;
  height: 24px;
  background: linear-gradient(rgba(238, 238, 238, 0), #eee);
}
.vbar {
  width: 16px;
  padding: 8px 3px 0 5px;
  color: #605e5c;
}
.vbar svg { width: 8px; height: 8px; }
.vbar .up { transform: rotate(180deg); }
.vbar i {
  display: block;
  width: 5px;
  height: 232px;
  margin: 6px 1px 0;
  background: linear-gradient(#c8c8c8, #c8c8c8) 0 0 / 100% 39px no-repeat #f1f1f1;
}
.handle {
  position: absolute;
  left: 49%;
  bottom: 0;
  width: 12px;
  height: 2px;
  background: #8a8886;
}
.brand {
  display: flex;
  align-items: center;
  justify-content: flex-end;
  gap: 8px;
  height: 50px;
  padding-right: 10px;
  color: #4d4d4d;
  font: 27px/30px Lato, sans-serif;
}
.brand svg { width: 42px; height: 28px; }
.pages {
  display: flex;
  height: 35px;
  margin-top: auto;
  background: #f3f2f1;
}
.pages button {
  width: 103px;
  border-right: 1px solid #c8c6c4;
}
.pages .arrows {
  width: 40px;
  padding-top: 13px;
  border-right: 1px solid #8a8886;
}
.arrows svg { width: 40px; height: 10px; }
.pages .on {
  width: 87px;
  border-bottom: 4px solid #f2c811;
  padding-top: 4px;
  background: #fff;
  font-weight: 600;
}
.pages .third { width: 111px; }
.pages .add {
  width: 39px;
  height: 32px;
  margin-top: 2px;
  border: 0;
  background: #f2c811;
}
.add svg { width: 12px; height: 12px; margin: auto; }

/* Filters pane */
.filters {
  display: flex;
  flex-direction: column;
  align-items: center;
  width: 33px;
  border-right: 1px solid #e1dfdd;
  background: #fff;
}
.back { width: 8px; height: 14px; margin-top: 15px; }
.funnel { width: 12px; height: 12px; margin: 34px 0 12px 4px; }
.filters h2 {
  writing-mode: vertical-rl;
  font-size: 14px;
  font-weight: 600;
}

/* Visualizations pane */
.head {
  display: flex;
  justify-content: space-between;
  height: 48px;
  padding: 15px 11px 0 12px;
}
.head h2 {
  font-size: 15px;
  line-height: 18px;
  font-weight: 600;
  color: #3b3a39;
}
.head svg { width: 8px; height: 14px; }
.viz {
  position: relative;
  width: 181px;
  border-right: 1px solid #e1dfdd;
}
.gallery {
  display: grid;
  grid-template-columns: repeat(6, 28px);
  grid-auto-rows: 24px;
  height: 175px;
}
.gallery button {
  display: flex;
  align-items: center;
  justify-content: center;
}
.gallery svg { width: 16px; height: 16px; }
.gallery .large svg { width: 18px; height: 18px; }
.gallery .picked svg {
  box-sizing: content-box;
  padding: 1px;
  border: 2px solid #605e5c;
}
.gallery .word {
  color: #1e7ac0;
  font-size: 15px;
  font-weight: 700;
}
.w { fill: #fff; stroke: #605e5c; }
.b { fill: #83beec; stroke: #1e6ab0; }
.g { fill: #c8c6c4; stroke: #605e5c; }
.k { fill: none; stroke: #3b3a39; }
.bl { fill: none; stroke: #1e7ac0; }
.t123 { font-size: 7px; fill: #1e7ac0; }
.custom {
  height: 29px;
  padding: 3px 4px;
  border-top: 1px dashed #d2d0ce;
  border-bottom: 1px solid #e1dfdd;
}
.custom svg { width: 20px; height: 20px; }
.modes {
  display: flex;
  gap: 2px;
  padding-left: 13px;
}
.modes button {
  width: 38px;
  height: 36px;
  padding: 0 8px;
}
.modes .on { border-bottom: 3px solid #c8a60c; padding-top: 3px; }
.modes svg { width: 22px; height: 22px; }
.find {
  display: flex;
  align-items: center;
  gap: 7px;
  border: 1px solid #c8c6c4;
  border-radius: 2px;
  background: #fff;
}
.find svg {
  flex: none;
  width: 16px;
  height: 16px;
}
.find input {
  min-width: 0;
  flex: 1;
  outline: 0;
}
.viz .find {
  height: 30px;
  margin: 4px 10px 8px 7px;
  padding-left: 9px;
  font-size: 12px;
}
.viz h4 {
  display: flex;
  align-items: center;
  gap: 7px;
  width: 174px;
  height: 37px;
  padding-left: 7px;
  border: solid #e1dfdd;
  border-width: 1px 0;
}
h4 svg { width: 12px; height: 8px; }
.option {
  width: 174px;
  padding: 18px 17px 0;
}
.option.first { height: 91px; }
.option.second {
  height: 112px;
  padding-top: 9px;
  border-bottom: 1px solid #e1dfdd;
}
.option label { display: block; }
.option .select {
  width: 139px;
  margin-bottom: 13px;
  border-radius: 2px;
}
.option .select svg { right: 7px; width: 10px; }
.switch {
  display: flex;
  align-items: center;
  gap: 4px;
  margin-top: 13px;
  padding-left: 9px;
}
.switch input {
  position: relative;
  width: 30px;
  height: 12px;
  appearance: none;
  background: linear-gradient(#605e5c, #605e5c) 0 50% / 100% 2px no-repeat;
}
.switch input::after {
  content: "";
  position: absolute;
  left: 0;
  width: 12px;
  height: 12px;
  border: 2px solid #605e5c;
  border-radius: 50%;
  background: #f3f2f1;
}
.switch input:checked::after {
  left: 18px;
  background: #605e5c;
}

/* Fields pane */
.data {
  position: relative;
  width: 244px;
}
.data .find {
  height: 28px;
  margin: 0 3px 5px 4px;
  padding-left: 6px;
  gap: 6px;
  border-color: #605e5c;
  font-size: 13px;
}
.find input::placeholder { color: #484644; }
.list {
  display: flex;
  border-top: 1px solid #e1dfdd;
}
.list ul {
  flex: 1;
  padding-top: 7px;
  list-style: none;
}
.list li {
  display: flex;
  align-items: center;
  justify-content: space-between;
  height: 24px;
  margin-left: 20px;
  padding-left: 18px;
  white-space: nowrap;
}
.list label {
  display: flex;
  align-items: center;
}
.list input {
  position: relative;
  width: 12px;
  height: 12px;
  border: 1px solid #605e5c;
  border-radius: 2px;
  appearance: none;
}
.list input:checked {
  border-color: #f2c811;
  background: #f2c811;
}
.list input:checked::after {
  content: "";
  position: absolute;
  left: 1px;
  top: 1px;
  width: 8px;
  height: 5px;
  border: solid #7a6517;
  border-width: 0 0 1px 1px;
  transform: rotate(-45deg);
}
.list i, .list svg {
  width: 12px;
  height: 16px;
  margin: 0 6px 0 4px;
}
.list .selected { background: #d2d0ce; }
.list button svg { margin: 0 2px 0 0; }
.bar {
  width: 8px;
  margin: 75px 3px 0 1px;
  background: #c8c6c4;
}
.status {
  height: 24px;
  padding: 4px 5px;
  border-top: 1px solid #e1dfdd;
  color: #3b3a39;
}

/* Numbered callouts */
.mark {
  position: absolute;
  z-index: 2;
  border: 5px solid #ff4343;
  border-radius: 5px;
  box-shadow: 2px 3px 5px rgba(0, 0, 0, .5), inset 2px 3px 4px rgba(0, 0, 0, .4);
  pointer-events: none;
}
.step {
  position: absolute;
  z-index: 3;
  width: 40px;
  height: 40px;
  border-radius: 50%;
  background: #ff4343;
  box-shadow: 2px 3px 5px rgba(0, 0, 0, .5);
  color: #fff;
  font-size: 26px;
  line-height: 40px;
  text-align: center;
}
.mark-1 { left: 22px; bottom: -7px; width: 166px; height: 35px; }
.mark-2 { left: 112px; top: 35px; width: 138px; height: 39px; }
.mark-4 { left: 49px; top: 246px; width: 43px; height: 43px; }
.mark-5 { left: 4px; top: 289px; width: 88px; height: 38px; }
.mark-6 { left: 17px; top: 406px; width: 82px; height: 36px; }
.step-1 { left: -16px; bottom: -9px; }
.step-2 { left: 160px; top: 68px; }
.step-3 { left: 411px; top: 284px; }
.step-4 { left: 50px; top: 205px; }
.step-5 { left: -37px; top: 287px; }
.step-6 { left: -24px; top: 404px; }
```
